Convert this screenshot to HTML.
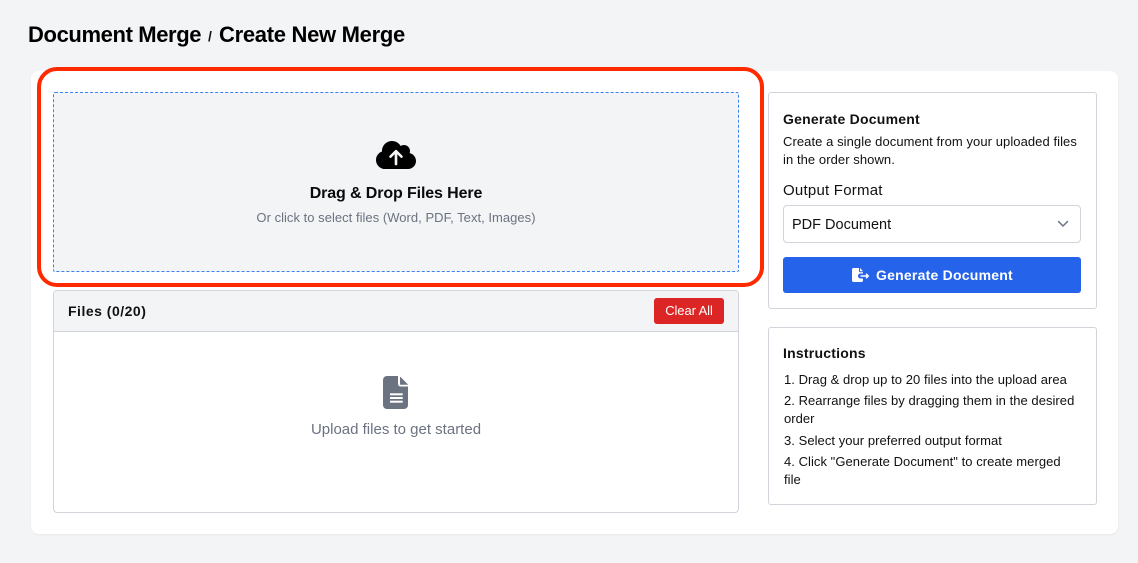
<!DOCTYPE html>
<html><head><meta charset="utf-8">
<style>
html,body{margin:0;padding:0;width:1138px;height:563px;overflow:hidden;background:#f3f4f6;font-family:"Liberation Sans",sans-serif;color:#000}
.a{position:absolute;box-sizing:border-box}
.t{position:absolute;white-space:nowrap}
</style></head><body>
<div class="t" style="left:28px;top:21px;font-size:22px;line-height:28px;font-weight:700;color:#000;letter-spacing:-.38px">Document Merge</div>
<div class="t" style="left:208px;top:26px;font-size:14px;line-height:20px;font-weight:700;color:#111">/</div>
<div class="t" style="left:219px;top:21px;font-size:22px;line-height:28px;font-weight:700;color:#000;letter-spacing:-.3px">Create New Merge</div>

<div class="a" style="left:31px;top:71px;width:1087px;height:463px;background:#fff;border-radius:8px;box-shadow:0 1px 2px rgba(0,0,0,.05)"></div>

<div class="a" style="left:53px;top:92px;width:686px;height:180px;background:#f3f4f6;border:1px dashed #3b82f6;border-radius:2px"></div>
<div class="a" style="left:37px;top:67px;width:727px;height:220px;border:4px solid #ff2a00;border-radius:20px"></div>

<svg class="a" style="left:376px;top:139px" width="40" height="32" viewBox="0 0 640 512"><path fill="#000" d="M144 480C64.500 480 0 415.500 0 336c0-62.800 40.200-116.200 96.200-135.900-.1-2.700-.2-5.400-.2-8.100 0-88.400 71.600-160 160-160 59.300 0 111 32.200 138.700 80.200C409.900 102 428.300 96 448 96c53 0 96 43 96 96 0 12.200-2.300 23.800-6.400 34.600C596 238.400 640 290.100 640 352c0 70.700-57.300 128-128 128H144z"/><path fill="none" stroke="#f3f4f6" stroke-width="42" stroke-linecap="round" stroke-linejoin="round" d="M320 400V200M232 282l88-88 88 88"/></svg>
<div class="t" style="left:53px;width:686px;text-align:center;top:184px;font-size:16px;line-height:20px;font-weight:700;color:#0a0a0a;letter-spacing:-.12px">Drag &amp; Drop Files Here</div>
<div class="t" style="left:53px;width:686px;text-align:center;top:209px;font-size:13px;line-height:17px;color:#6b7280;letter-spacing:.03px">Or click to select files (Word, PDF, Text, Images)</div>

<div class="a" style="left:53px;top:290px;width:686px;height:223px;border:1px solid #d1d5db;border-radius:4px;overflow:hidden;background:#fff">
  <div class="a" style="left:0;top:0;width:684px;height:41px;background:#f3f4f6;border-bottom:1px solid #d1d5db"></div>
</div>
<div class="t" style="left:68px;top:302px;font-size:14px;line-height:18px;font-weight:700;color:#111;letter-spacing:.5px">Files (0/20)</div>
<div class="a" style="left:654px;top:298px;width:70px;height:26px;background:#dc2626;border-radius:3px"></div>
<div class="t" style="left:654px;width:70px;text-align:center;top:303px;font-size:13px;line-height:16px;color:#fff;letter-spacing:-.1px">Clear All</div>

<svg class="a" style="left:383px;top:376px" width="25" height="33" viewBox="0 0 25 33"><path fill="#6b7280" d="M4 0H15V7.800c0 1.500 1 2.700 2.500 2.700H25V29c0 2.200-1.800 4-4 4H4c-2.200 0-4-1.800-4-4V4C0 1.800 1.800 0 4 0z"/><path fill="#6b7280" stroke="#6b7280" stroke-width=".5" stroke-linejoin="round" d="M17.300 1 24.700 8.500H17.300z"/><rect x="7" y="17.300" width="12.700" height="2" fill="#fff"/><rect x="7" y="21" width="12.700" height="2" fill="#fff"/><rect x="7" y="24.700" width="12.700" height="2" fill="#fff"/></svg>
<div class="t" style="left:53px;width:686px;text-align:center;top:421px;font-size:15px;line-height:18px;color:#6b7280">Upload files to get started</div>

<div class="a" style="left:768px;top:92px;width:329px;height:217px;border:1px solid #d1d5db;border-radius:3px;background:#fff"></div>
<div class="t" style="left:783px;top:110px;font-size:14px;line-height:18px;font-weight:700;color:#111;letter-spacing:.23px">Generate Document</div>
<div class="t" style="left:783px;top:133px;font-size:13px;line-height:18px;color:#111;letter-spacing:.07px">Create a single document from your uploaded files<br>in the order shown.</div>
<div class="t" style="left:783px;top:182px;font-size:15px;line-height:18px;color:#111;letter-spacing:.23px">Output Format</div>
<div class="a" style="left:783px;top:205px;width:298px;height:38px;border:1px solid #d1d5db;border-radius:4px;background:#fff"></div>
<div class="t" style="left:792px;top:216px;font-size:14.500px;line-height:18px;color:#111">PDF Document</div>
<svg class="a" style="left:1056px;top:219px" width="14" height="10" viewBox="0 0 14 10"><path d="M2.500 2.500 7 7l4.500-4.500" fill="none" stroke="#6b7280" stroke-width="1.500" stroke-linecap="round" stroke-linejoin="round"/></svg>
<div class="a" style="left:783px;top:257px;width:298px;height:36px;background:#2563eb;border-radius:3px"></div>
<svg class="a" style="left:852px;top:268px" width="18" height="14" viewBox="0 0 18 14"><path fill="#fff" d="M1.500 0H7V3.300c0 .6.400 1 1 1H11V5.500H8.500a2.500 2.500 0 0 0 0 5H11V12.500c0 .8-.7 1.500-1.500 1.500h-8C.7 14 0 13.300 0 12.500V1.500C0 .7.700 0 1.500 0z"/><path fill="#fff" d="M8 0 11 3.300H8z"/><path d="M8.500 8h7.500M14 5.800l2.300 2.200L14 10.200" fill="none" stroke="#fff" stroke-width="1.400"/></svg>
<div class="t" style="left:876px;top:266px;font-size:14px;line-height:18px;font-weight:700;color:#fff;letter-spacing:.23px">Generate Document</div>

<div class="a" style="left:768px;top:327px;width:329px;height:178px;border:1px solid #d1d5db;border-radius:3px;background:#fff"></div>
<div class="t" style="left:783px;top:344px;font-size:14px;line-height:18px;font-weight:700;color:#111;letter-spacing:.22px">Instructions</div>
<div class="t" style="left:784px;top:371px;font-size:13px;line-height:18px;color:#111;letter-spacing:.05px">1. Drag &amp; drop up to 20 files into the upload area</div>
<div class="t" style="left:784px;top:392px;font-size:13px;line-height:18px;color:#111;letter-spacing:.04px">2. Rearrange files by dragging them in the desired<br>order</div>
<div class="t" style="left:784px;top:432px;font-size:13px;line-height:18px;color:#111;letter-spacing:.05px">3. Select your preferred output format</div>
<div class="t" style="left:784px;top:453px;font-size:13px;line-height:18px;color:#111;letter-spacing:.05px">4. Click "Generate Document" to create merged<br>file</div>
</body></html>
